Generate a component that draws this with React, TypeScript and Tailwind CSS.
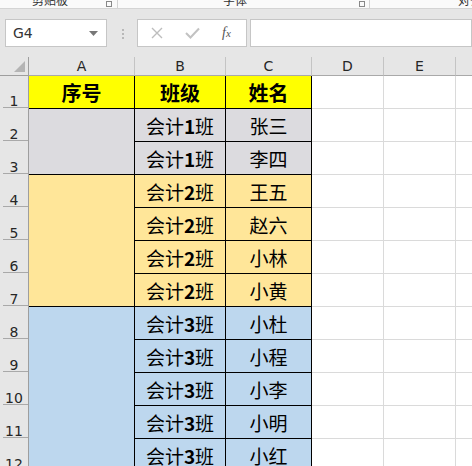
import React from "react";

const cjk = "font-['Noto_Sans_CJK_SC','Noto_Sans',sans-serif]";
const hdr = "font-['DejaVu_Sans','Liberation_Sans',sans-serif]";

type Row = { b: string; c: string };

const ROWS: Row[] = [
  { b: "1", c: "张三" },
  { b: "1", c: "李四" },
  { b: "2", c: "王五" },
  { b: "2", c: "赵六" },
  { b: "2", c: "小林" },
  { b: "2", c: "小黄" },
  { b: "3", c: "小杜" },
  { b: "3", c: "小程" },
  { b: "3", c: "小李" },
  { b: "3", c: "小明" },
  { b: "3", c: "小红" },
];

// 合并单元格 A 列（行2开始）
const MERGES = [
  { start: 2, span: 2, bg: "bg-[#dcdbdf]" },
  { start: 4, span: 4, bg: "bg-[#ffe699]" },
  { start: 8, span: 5, bg: "bg-[#bdd7ee]" },
];

function bgFor(row: number) {
  if (row <= 3) return "bg-[#dcdbdf]";
  if (row <= 7) return "bg-[#ffe699]";
  return "bg-[#bdd7ee]";
}

function RowNum({ n, row }: { n: number; row: number }) {
  return (
    <div
      className={`${hdr} flex items-end justify-center border-r border-[#9e9e9e] bg-[#e6e6e6] pb-[1px] text-[14px] leading-none text-[#262626]`}
      style={{ gridRow: row }}
    >
      <div className="relative flex h-full w-full items-end justify-center">
        {n}
        <span className="absolute bottom-0 left-[3px] right-0 h-px bg-[#a9a9a9]" />
      </div>
    </div>
  );
}

export default function App() {
  return (
    <div className="h-[466px] w-[472px] overflow-hidden bg-[#e6e6e6]">
      {/* 功能区底部 */}
      <div
        className={`${cjk} flex h-[9px] items-end overflow-hidden whitespace-nowrap border-b border-[#d4d4d4] bg-[#fafafa] text-[12px] leading-[14px] text-[#333]`}
      >
        <span className="ml-[32px] mb-[1px] shrink-0">剪贴板</span>
        <span className="ml-[38px] mb-[1px] h-[6px] w-[6px] shrink-0 border border-[#888]" />
        <span className="ml-[5px] h-[9px] w-px shrink-0 bg-[#d4d4d4]" />
        <span className="ml-[105px] mb-[1px] shrink-0">字体</span>
        <span className="ml-[112px] mb-[1px] h-[6px] w-[6px] shrink-0 border border-[#888]" />
        <span className="ml-[4px] h-[9px] w-px shrink-0 bg-[#d4d4d4]" />
        <span className="ml-[88px] mb-[1px] shrink-0">对齐方式</span>
      </div>

      {/* 编辑栏 */}
      <div className="flex h-[48px] items-start pt-[10px]">
        <div className="ml-[5px] flex h-[28px] w-[102px] items-center justify-between border border-[#c6c6c6] bg-white pl-[7px] pr-[8px]">
          <span className={`${hdr} text-[14px] text-[#333]`}>G4</span>
          <svg width="9" height="5" viewBox="0 0 9 5">
            <path d="M0 0h9L4.5 5z" fill="#777" />
          </svg>
        </div>
        <div className="ml-[15px] mt-[10px] flex flex-col gap-[2px]">
          <span className="h-[2px] w-[2px] bg-[#b8b8b8]" />
          <span className="h-[2px] w-[2px] bg-[#b8b8b8]" />
          <span className="h-[2px] w-[2px] bg-[#b8b8b8]" />
        </div>
        <div className="ml-[13px] flex h-[28px] w-[110px] items-center border border-[#c6c6c6] bg-white">
          <svg className="ml-[13px]" width="12" height="12" viewBox="0 0 12 12">
            <path d="M1 1l10 10M11 1L1 11" stroke="#bdbdbd" strokeWidth="1.4" />
          </svg>
          <svg className="ml-[22px]" width="15" height="12" viewBox="0 0 15 12">
            <path d="M1 6l4.5 4.5L14 1.5" stroke="#c2c2c2" strokeWidth="2" fill="none" />
          </svg>
          <span className="ml-[22px] font-['Liberation_Serif',serif] text-[14px] italic leading-none text-[#555]">
            f<span className="text-[11px]">x</span>
          </span>
        </div>
        <div className="ml-[3px] h-[28px] flex-1 border border-[#c6c6c6] bg-white" />
      </div>

      {/* 工作表 */}
      <div className="grid grid-cols-[29px_106px_91px_86px_72px_72px_1fr] grid-rows-[19px_repeat(12,33px)] bg-white">
        {/* 列标题 */}
        <div className="relative border-r border-b border-[#9e9e9e] bg-[#e6e6e6]">
          <svg className="absolute right-[3px] bottom-[3px]" width="11" height="11" viewBox="0 0 11 11">
            <path d="M11 0v11H0z" fill="#b4b4b4" />
          </svg>
        </div>
        {["A", "B", "C", "D", "E", ""].map((l, i) => (
          <div
            key={i}
            className={`${hdr} flex items-center justify-center border-b border-[#a9a9a9] bg-[#e6e6e6] text-[14px] text-[#262626] ${
              i < 5 ? "border-r border-r-[#c4c4c4]" : ""
            }`}
          >
            {l}
          </div>
        ))}

        {/* 第1行 表头 */}
        <RowNum n={1} row={2} />
        {["序号", "班级", "姓名"].map((t) => (
          <div
            key={t}
            className={`${cjk} flex items-center justify-center border-r border-b border-black bg-[#ffff00] pt-[2px] text-[20px] font-bold text-black`}
          >
            {t}
          </div>
        ))}
        <div className="border-r border-b border-[#dadada]" />
        <div className="border-r border-b border-[#dadada]" />
        <div className="border-b border-[#dadada]" />

        {/* 行号 */}
        {ROWS.map((_, i) => (
          <RowNum key={`n${i}`} n={i + 2} row={i + 3} />
        ))}

        {/* A 列合并单元格 */}
        {MERGES.map((m) => (
          <div
            key={m.start}
            className={`border-r border-b border-black ${m.bg}`}
            style={{ gridRow: `${m.start + 1} / span ${m.span}`, gridColumn: 2 }}
          />
        ))}

        {/* B-F 列 */}
        {ROWS.map((r, i) => {
          const row = i + 3;
          const bg = bgFor(i + 2);
          return (
            <React.Fragment key={`r${i}`}>
              <div
                className={`${cjk} flex items-center justify-center border-r border-b border-black pt-[3px] text-[19px] text-black ${bg}`}
                style={{ gridRow: row, gridColumn: 3 }}
              >
                会计<span className="font-bold">{r.b}</span>班
              </div>
              <div
                className={`${cjk} flex items-center justify-center border-r border-b border-black pt-[3px] text-[19px] text-black ${bg}`}
                style={{ gridRow: row, gridColumn: 4 }}
              >
                {r.c}
              </div>
              <div className="border-r border-b border-[#dadada]" style={{ gridRow: row, gridColumn: 5 }} />
              <div className="border-r border-b border-[#dadada]" style={{ gridRow: row, gridColumn: 6 }} />
              <div className="border-b border-[#dadada]" style={{ gridRow: row, gridColumn: 7 }} />
            </React.Fragment>
          );
        })}
      </div>
    </div>
  );
}
